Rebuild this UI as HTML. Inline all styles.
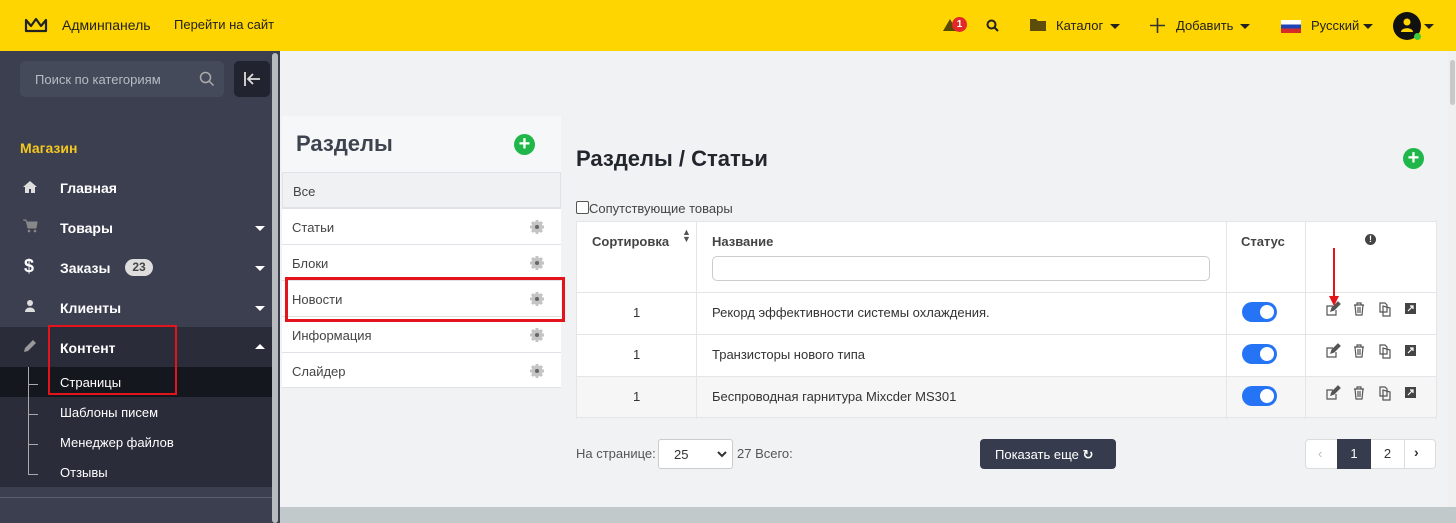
<!DOCTYPE html>
<html><head><meta charset="utf-8"><style>
*{box-sizing:border-box;margin:0;padding:0}
body{width:1456px;height:523px;overflow:hidden;background:#f0f2f4;font-family:"Liberation Sans","DejaVu Sans",sans-serif;position:relative;font-size:13px;color:#333}
.a{position:absolute}
.top{left:0;top:0;width:1456px;height:51px;background:#fed500}
.side{left:0;top:51px;width:280px;height:472px;background:#3b3f50}
.si{color:#fff;font-weight:bold;font-size:14px;left:60px}
.sub{color:#fff;font-size:13px;left:60px}
.car{width:0;height:0;border-left:5px solid transparent;border-right:5px solid transparent;border-top:5px solid #fff;left:255px}
.li{left:282px;width:279px;height:36px;border-top:1px solid #dfe2e6;background:#fff;font-size:13px;color:#444;padding:11px 10px}
.gear{right:16px;top:10px;width:16px;height:16px}
.row{left:576px;width:860px;height:42px;background:#fff;border-top:1px solid #e3e5e8}
.cell{font-size:13px;color:#333;top:13px}
.vl{width:1px;background:#e3e5e8}
.tog{left:1242px;width:35px;height:20px;border-radius:10px;background:#2574f5}
.tog:after{content:"";position:absolute;right:3px;top:3px;width:14px;height:14px;border-radius:50%;background:#fff}
</style></head><body>
<svg width="0" height="0" style="position:absolute"><defs><g id="g"><circle cx="8" cy="8" r="5.5" fill="#c4c4c4"/><g stroke="#c4c4c4" stroke-width="3"><path d="M8 1v14M1 8h14M3 3l10 10M13 3L3 13"/></g><circle cx="8" cy="8" r="2" fill="#666"/></g></defs></svg>
<div class="a top"></div>
<svg class="a" style="left:24px;top:17px" width="24" height="16" viewBox="0 0 24 16"><path d="M2 3l5 6 5-7 5 7 5-6v11H2z" fill="none" stroke="#222" stroke-width="2.2" stroke-linejoin="round"/></svg>
<div class="a" style="left:62px;top:17px;font-size:14px;color:#222">Админпанель</div>
<div class="a" style="left:174px;top:17px;font-size:13px;color:#222">Перейти на сайт</div>
<svg class="a" style="left:943px;top:19px" width="14" height="12"><path d="M7 0L14 12H0z" fill="#5a4a00"/></svg>
<div class="a" style="left:952px;top:17px;width:15px;height:15px;border-radius:50%;background:#e32828;color:#fff;font-size:10px;text-align:center;line-height:15px;font-weight:bold">1</div>
<svg class="a" style="left:986px;top:19px" width="13" height="13"><circle cx="5.5" cy="5.5" r="4" fill="none" stroke="#222" stroke-width="2"/><path d="M8.5 8.5L12 12" stroke="#222" stroke-width="2"/></svg>
<svg class="a" style="left:1030px;top:18px" width="16" height="13"><path d="M0 1h6l2 2h8v10H0z" fill="#5c4d0a"/></svg>
<div class="a" style="left:1056px;top:18px;color:#222">Каталог</div>
<div class="a car" style="left:1110px;top:24px;border-top-color:#222"></div>
<svg class="a" style="left:1150px;top:18px" width="15" height="15"><path d="M7.5 0v15M0 7.5h15" stroke="#333" stroke-width="1.6"/></svg>
<div class="a" style="left:1176px;top:18px;color:#222">Добавить</div>
<div class="a car" style="left:1240px;top:24px;border-top-color:#222"></div>
<div class="a" style="left:1281px;top:20px;width:20px;height:13px;background:linear-gradient(#fff 0 33%,#1d43b8 33% 66%,#d62b2b 66%)"></div>
<div class="a" style="left:1311px;top:18px;color:#222">Русский</div>
<div class="a car" style="left:1363px;top:24px;border-top-color:#222"></div>
<div class="a" style="left:1393px;top:12px;width:28px;height:28px;border-radius:50%;background:#111"></div>
<svg class="a" style="left:1399px;top:17px" width="16" height="16"><circle cx="8" cy="5" r="3.5" fill="#fed500"/><path d="M2 15c0-5 12-5 12 0z" fill="#fed500"/></svg>
<div class="a" style="left:1414px;top:33px;width:7px;height:7px;border-radius:50%;background:#3fcb3f"></div>
<div class="a car" style="left:1424px;top:24px;border-top-color:#222"></div>

<div class="a side"></div>
<div class="a" style="left:272px;top:53px;width:6px;height:470px;background:#b8bbbe;border-radius:3px"></div>
<div class="a" style="left:20px;top:61px;width:204px;height:36px;background:#454a5b;border-radius:5px"></div>
<div class="a" style="left:35px;top:72px;color:#b9bcc4;font-size:13px">Поиск по категориям</div>
<svg class="a" style="left:199px;top:71px" width="16" height="16"><circle cx="6.5" cy="6.5" r="5" fill="none" stroke="#aaa" stroke-width="1.5"/><path d="M10 10l4.5 4.5" stroke="#aaa" stroke-width="1.5"/></svg>
<div class="a" style="left:234px;top:61px;width:36px;height:36px;background:#21242e;border-radius:5px"></div>
<svg class="a" style="left:243px;top:71px" width="18" height="16"><path d="M2 1v14M17 8H5M10 3L5 8l5 5" fill="none" stroke="#ddd" stroke-width="1.8"/></svg>
<div class="a" style="left:20px;top:140px;color:#f4c81f;font-size:14px;font-weight:bold">Магазин</div>
<svg class="a" style="left:22px;top:180px" width="16" height="14"><path d="M8 1L1 7h2v6h4V9h2v4h4V7h2z" fill="#ddd"/></svg>
<div class="a si" style="top:180px">Главная</div>
<svg class="a" style="left:22px;top:219px" width="16" height="14"><path d="M1 1h3l2 8h8l1-6H5" fill="#888" stroke="#888"/><circle cx="7" cy="12" r="1.3" fill="#888"/><circle cx="13" cy="12" r="1.3" fill="#888"/></svg>
<div class="a si" style="top:220px">Товары</div><div class="a car" style="top:226px"></div>
<div class="a" style="left:24px;top:256px;color:#fff;font-size:18px;font-weight:bold">$</div>
<div class="a si" style="top:260px">Заказы</div>
<div class="a" style="left:125px;top:259px;width:28px;height:17px;border-radius:9px;background:#ddd;color:#444;font-size:12px;font-weight:bold;text-align:center;line-height:17px">23</div>
<div class="a car" style="top:266px"></div>
<svg class="a" style="left:22px;top:299px" width="16" height="14"><circle cx="8" cy="4" r="3" fill="#ddd"/><path d="M3 13c0-6 10-6 10 0z" fill="#ddd"/></svg>
<div class="a si" style="top:300px">Клиенты</div><div class="a car" style="top:306px"></div>
<div class="a" style="left:0;top:327px;width:272px;height:40px;background:#2a2d39"></div>
<svg class="a" style="left:22px;top:338px" width="16" height="16"><path d="M2 14l1-4 8-8 3 3-8 8z" fill="#999"/></svg>
<div class="a si" style="top:340px">Контент</div>
<div class="a" style="left:255px;top:344px;border-left:5px solid transparent;border-right:5px solid transparent;border-bottom:5px solid #fff"></div>
<div class="a" style="left:0;top:367px;width:272px;height:30px;background:#15171e"></div>
<div class="a" style="left:0;top:397px;width:272px;height:90px;background:#2a2d39"></div>
<div class="a" style="left:28px;top:367px;width:1px;height:108px;background:#aaa"></div>
<div class="a" style="left:28px;top:384px;width:10px;height:1px;background:#aaa"></div>
<div class="a" style="left:28px;top:414px;width:10px;height:1px;background:#aaa"></div>
<div class="a" style="left:28px;top:444px;width:10px;height:1px;background:#aaa"></div>
<div class="a" style="left:28px;top:474px;width:10px;height:1px;background:#aaa"></div>
<div class="a sub" style="top:375px">Страницы</div>
<div class="a sub" style="top:405px">Шаблоны писем</div>
<div class="a sub" style="top:435px">Менеджер файлов</div>
<div class="a sub" style="top:465px">Отзывы</div>
<div class="a" style="left:0;top:497px;width:272px;height:1px;background:#5a5e6c"></div>
<div class="a" style="left:48px;top:325px;width:129px;height:70px;border:2px solid #e3141b"></div>

<div class="a" style="left:280px;top:507px;width:1176px;height:16px;background:#c2c9ca"></div>
<div class="a" style="left:1448px;top:51px;width:8px;height:456px;background:#f0f0f0"></div>
<div class="a" style="left:1450px;top:60px;width:5px;height:45px;background:#c8c8c8;border-radius:3px"></div>

<div class="a" style="left:282px;top:116px;width:279px;height:57px;background:#f6f7f8"></div>
<div class="a" style="left:296px;top:131px;font-size:22px;color:#3d4450;font-weight:bold">Разделы</div>
<div class="a" style="left:514px;top:134px;width:21px;height:21px;border-radius:50%;background:#1fb74a;color:#fff;font-size:20px;font-weight:bold;text-align:center;line-height:21px">+</div>
<div class="a li" style="top:172px;background:#f0f1f3;border:1px solid #dfe2e6">Все</div>
<div class="a li" style="top:208px">Статьи<svg class="a gear"><use href="#g"/></svg></div>
<div class="a li" style="top:244px">Блоки<svg class="a gear"><use href="#g"/></svg></div>
<div class="a li" style="top:280px">Новости<svg class="a gear"><use href="#g"/></svg></div>
<div class="a li" style="top:316px">Информация<svg class="a gear"><use href="#g"/></svg></div>
<div class="a li" style="top:352px;border-bottom:1px solid #dfe2e6">Слайдер<svg class="a gear"><use href="#g"/></svg></div>
<div class="a" style="left:285px;top:277px;width:280px;height:45px;border:3px solid #e3141b"></div>

<div class="a" style="left:576px;top:146px;font-size:22px;color:#22262d;font-weight:bold">Разделы / Статьи</div>
<div class="a" style="left:1403px;top:148px;width:21px;height:21px;border-radius:50%;background:#1fb74a;color:#fff;font-size:20px;font-weight:bold;text-align:center;line-height:21px">+</div>
<div class="a" style="left:576px;top:201px;width:13px;height:13px;border:1px solid #555;border-radius:2px;background:#fff"></div>
<div class="a" style="left:589px;top:201px;font-size:13px;color:#444">Сопутствующие товары</div>
<div class="a" style="left:576px;top:221px;width:860px;height:71px;background:#fff;border-top:1px solid #e3e5e8"></div>
<div class="a" style="left:592px;top:234px;font-weight:bold;color:#444">Сортировка</div>
<div class="a" style="left:682px;top:229px;font-size:9px;color:#555;line-height:7px">&#9650;<br>&#9660;</div>
<div class="a" style="left:712px;top:234px;font-weight:bold;color:#444">Название</div>
<div class="a" style="left:712px;top:256px;width:498px;height:25px;border:1px solid #ccc;border-radius:5px;background:#fff"></div>
<div class="a" style="left:1241px;top:234px;font-weight:bold;color:#444">Статус</div>
<div class="a" style="left:1365px;top:234px;width:11px;height:11px;border-radius:50%;background:#444;color:#fff;font-size:9px;font-weight:bold;text-align:center;line-height:11px">!</div>
<div class="a row" style="top:292px"></div>
<div class="a row" style="top:334px"></div>
<div class="a row" style="top:376px;background:#f6f6f7;border-bottom:1px solid #e3e5e8"></div>
<div class="a vl" style="left:576px;top:221px;height:198px"></div>
<div class="a vl" style="left:696px;top:221px;height:198px"></div>
<div class="a vl" style="left:1226px;top:221px;height:198px"></div>
<div class="a vl" style="left:1305px;top:221px;height:198px"></div>
<div class="a vl" style="left:1436px;top:221px;height:198px"></div>
<div class="a cell" style="left:633px;top:305px">1</div>
<div class="a cell" style="left:712px;top:305px">Рекорд эффективности системы охлаждения.</div>
<div class="a cell" style="left:633px;top:347px">1</div>
<div class="a cell" style="left:712px;top:347px">Транзисторы нового типа</div>
<div class="a cell" style="left:633px;top:389px">1</div>
<div class="a cell" style="left:712px;top:389px">Беспроводная гарнитура Mixcder MS301</div>
<div class="a tog" style="top:302px"></div>
<div class="a tog" style="top:344px"></div>
<div class="a tog" style="top:386px"></div>
<svg class="a" style="left:1326px;top:300px" width="90" height="110">
<g id="r" fill="none" stroke="#555" stroke-width="1.2">
<path d="M7 6H1v9h9V10"/><path d="M5 11l1-3 6-6 2 2-6 6z" fill="#555"/>
<path d="M28 5h10M31 5V3h4v2M29 5l1 10h6l1-10M32 7v6M34 7v6"/>
<path d="M54 3h5l2 2v7h-7zM57 6v10h7V8z"/>
<rect x="79" y="3" width="11" height="11" fill="#444" stroke="none"/><path d="M82 11l5-5M84 6h3v3" stroke="#fff"/>
</g>
<use href="#r" y="42"/><use href="#r" y="84"/>
</svg>
<div class="a" style="left:1333px;top:248px;width:2px;height:52px;background:#e3141b"></div>
<div class="a" style="left:1329px;top:296px;border-left:5px solid transparent;border-right:5px solid transparent;border-top:10px solid #e3141b"></div>

<div class="a" style="left:576px;top:446px;color:#555">На странице:</div>
<div class="a" style="left:658px;top:439px;width:75px;height:30px;border:1px solid #ccc;border-radius:3px;background:#fff;padding:7px 15px;color:#333">25</div>
<svg class="a" style="left:717px;top:450px" width="10" height="8"><path d="M1 2l4 4 4-4" fill="none" stroke="#333" stroke-width="2"/></svg>
<div class="a" style="left:737px;top:446px;color:#555">27 Всего:</div>
<div class="a" style="left:980px;top:439px;width:136px;height:30px;border-radius:4px;background:#363c4d;color:#fff;padding:8px 0 0 15px;font-size:13px">Показать еще <b>&#8635;</b></div>
<div class="a" style="left:1305px;top:439px;width:131px;height:30px;border:1px solid #dcdcdc;border-radius:4px;background:#fff"></div>
<div class="a" style="left:1318px;top:446px;color:#bbb">&lsaquo;</div>
<div class="a" style="left:1337px;top:439px;width:34px;height:30px;background:#363c4d;color:#fff;text-align:center;line-height:30px">1</div>
<div class="a" style="left:1371px;top:439px;width:34px;height:30px;border-right:1px solid #dcdcdc;text-align:center;line-height:30px">2</div>
<div class="a" style="left:1414px;top:444px;font-weight:bold;font-size:14px">&rsaquo;</div>
</body></html>
